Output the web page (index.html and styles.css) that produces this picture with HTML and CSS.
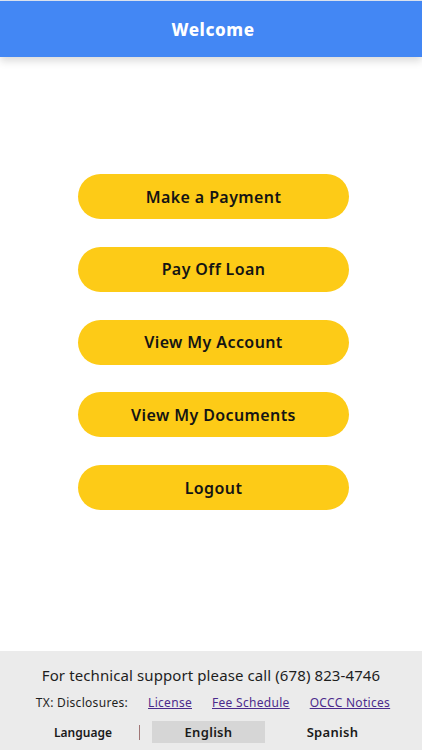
FILE: index.html
```html
<!DOCTYPE html>
<html lang="en">
<head>
    <meta charset="UTF-8">
    <meta name="viewport" content="width=device-width, initial-scale=1.0">
    <title>Welcome</title>
    <link rel="stylesheet" href="styles.css">
</head>
<body>
    <div class="app">
        <header class="topbar">
            <h1>Welcome</h1>
        </header>

        <main class="menu">
            <button class="menu-btn">Make a Payment</button>
            <button class="menu-btn">Pay Off Loan</button>
            <button class="menu-btn">View My Account</button>
            <button class="menu-btn">View My Documents</button>
            <button class="menu-btn">Logout</button>
        </main>

        <footer class="footer">
            <p class="support">For technical support please call (678) 823-4746</p>
            <div class="disclosures">
                <span>TX: Disclosures:</span>
                <a href="#">License</a>
                <a href="#">Fee Schedule</a>
                <a href="#">OCCC Notices</a>
            </div>
            <div class="language">
                <span class="lang-label">Language</span>
                <span class="lang-sep"></span>
                <span class="lang-opt active">English</span>
                <span class="lang-opt">Spanish</span>
            </div>
        </footer>
    </div>
</body>
</html>
```

FILE: styles.css
```css
body {
    font-family: "Noto Sans", Arial, sans-serif;
    margin: 0;
    padding: 0;
    background-color: #ffffff;
    color: #1a1a1a;
}
.app {
    display: flex;
    flex-direction: column;
    height: 750px;
    border-top: 1px solid #dfe6f2;
    box-sizing: border-box;
}
.topbar {
    background-color: #4387f4;
    height: 56px;
    display: flex;
    align-items: center;
    justify-content: center;
    box-shadow: 0 4px 8px rgba(0, 0, 0, 0.15);
}
.topbar h1 {
    margin: 0 0 0 4px;
    color: #ffffff;
    font-size: 17px;
    font-weight: 800;
    letter-spacing: 0.6px;
}
.menu {
    flex: 1;
    display: flex;
    flex-direction: column;
    align-items: center;
    gap: 27.75px;
    padding-top: 117px;
    padding-left: 5px;
}
.menu-btn {
    width: 271px;
    height: 45px;
    border: none;
    border-radius: 23px;
    background-color: #fdcb17;
    color: #141414;
    font-family: "Noto Sans", Arial, sans-serif;
    font-size: 16px;
    font-weight: 600;
    letter-spacing: 0.4px;
    cursor: pointer;
}
.footer {
    background-color: #ebebeb;
    height: 99px;
    display: flex;
    flex-direction: column;
    align-items: center;
    padding-top: 14px;
    box-sizing: border-box;
}
.support {
    margin: 0;
    font-size: 15px;
    letter-spacing: 0.1px;
    color: #1e1e1e;
}
.disclosures {
    display: flex;
    gap: 20px;
    margin-top: 9px;
    margin-left: 4px;
    font-size: 12px;
    letter-spacing: 0.3px;
    color: #1e1e1e;
}
.disclosures a {
    color: #4b2a8c;
}
.language {
    display: flex;
    align-items: center;
    margin-top: 10px;
    font-size: 13px;
    font-weight: 600;
    width: 422px;
}
.lang-label {
    width: 110px;
    margin-left: 28px;
    text-align: center;
    font-size: 12px;
}
.lang-sep {
    width: 1px;
    height: 15px;
    background-color: #a07676;
    margin: 0 12px 0 1px;
}
.lang-opt {
    width: 113px;
    height: 22px;
    line-height: 22px;
    text-align: center;
    letter-spacing: 0.3px;
}
.lang-opt.active {
    background-color: #d6d6d6;
}
.lang-opt + .lang-opt {
    margin-left: 11px;
}
```
